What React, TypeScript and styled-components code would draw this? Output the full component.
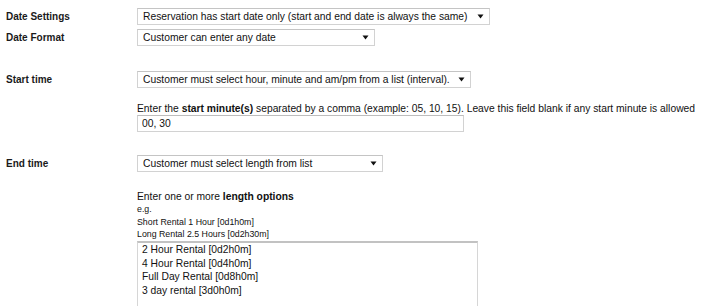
import React from "react";
import styled, { createGlobalStyle } from "styled-components";

const Global = createGlobalStyle`
  html, body { margin: 0; padding: 0; background: #fff; }
  body { font-family: "Liberation Sans", Arial, sans-serif; color: #111; overflow: hidden; }
`;

const Page = styled.div`
  padding: 8px 0 0 6px;
  height: 306px;
  box-sizing: border-box;
  overflow: hidden;
  display: flex;
  flex-direction: column;
`;

const Row = styled.div<{ $mt: number }>`
  display: grid;
  grid-template-columns: 131px auto;
  align-items: center;
  margin-top: ${(p) => p.$mt}px;
`;

const Label = styled.div`
  font-size: 10px;
  font-weight: bold;
  color: #1a1a1a;
`;

const Box = styled.div<{ $w: number }>`
  width: ${(p) => p.$w}px;
  height: 17px;
  box-sizing: border-box;
  border: 1px solid #d2d2d2;
  border-top-color: #c4c4c4;
  background: #fff;
  display: flex;
  align-items: center;
  gap: 4px;
  padding: 0 5px 0 5px;
`;

const NativeSelect = styled.select`
  appearance: none;
  -webkit-appearance: none;
  border: none;
  outline: none;
  background: transparent;
  font-family: inherit;
  font-size: 10.3px;
  color: #111;
  padding: 0;
  margin: 0;
  flex: 1;
  min-width: 0;
  height: 15px;
  line-height: 15px;
`;

const Arrow = () => (
  <svg width="7" height="5" viewBox="0 0 7 5" style={{ flex: "none" }}>
    <polygon points="0.5,0.5 6.5,0.5 3.5,4.5" fill="#111" />
  </svg>
);

const Select = ({ w, value }: { w: number; value: string }) => (
  <Box $w={w}>
    <NativeSelect defaultValue={value}>
      <option>{value}</option>
    </NativeSelect>
    <Arrow />
  </Box>
);

const Field = styled.div<{ $mt: number }>`
  margin-left: 131px;
  margin-top: ${(p) => p.$mt}px;
  display: flex;
  flex-direction: column;
  align-items: flex-start;
`;

const Help = styled.div`
  font-size: 10.3px;
  line-height: 13px;
  white-space: nowrap;
  color: #111;
`;

const Small = styled.div`
  font-size: 8.8px;
  line-height: 12.7px;
  white-space: nowrap;
  color: #111;
`;

const TextInput = styled.input<{ $w: number }>`
  width: ${(p) => p.$w}px;
  height: 17px;
  box-sizing: border-box;
  border: 1px solid #d2d2d2;
  border-top-color: #bdbdbd;
  padding: 0 4px;
  margin: 0;
  font-family: inherit;
  font-size: 10.3px;
  color: #111;
  outline: none;
`;

const TextArea = styled.textarea<{ $w: number }>`
  width: ${(p) => p.$w}px;
  height: 90px;
  flex: none;
  box-sizing: border-box;
  border: 1px solid #d6d6d6;
  border-top: 2px solid #c2c2c2;
  padding: 0 4px;
  margin: 0;
  font-family: inherit;
  font-size: 10.3px;
  line-height: 13.5px;
  color: #111;
  resize: none;
  outline: none;
  overflow: hidden;
`;

export default function App() {
  return (
    <>
      <Global />
      <Page>
        <Row $mt={0}>
          <Label>Date Settings</Label>
          <Select w={353} value="Reservation has start date only (start and end date is always the same)" />
        </Row>
        <Row $mt={4}>
          <Label>Date Format</Label>
          <Select w={238} value="Customer can enter any date" />
        </Row>
        <Row $mt={25}>
          <Label>Start time</Label>
          <Select w={334} value="Customer must select hour, minute and am/pm from a list (interval)." />
        </Row>
        <Field $mt={14}>
          <Help>
            Enter the <b>start minute(s)</b> separated by a comma (example: 05, 10, 15). Leave this field blank if any start minute is allowed
          </Help>
          <TextInput $w={327} defaultValue="00, 30" />
        </Field>
        <Row $mt={23}>
          <Label>End time</Label>
          <Select w={246} value="Customer must select length from list" />
        </Row>
        <Field $mt={18}>
          <Help>
            Enter one or more <b>length options</b>
          </Help>
          <Small>e.g.</Small>
          <Small>Short Rental 1 Hour [0d1h0m]</Small>
          <Small>Long Rental 2.5 Hours [0d2h30m]</Small>
          <TextArea
            $w={341}
            defaultValue={"2 Hour Rental [0d2h0m]\n4 Hour Rental [0d4h0m]\nFull Day Rental [0d8h0m]\n3 day rental [3d0h0m]"}
          />
        </Field>
      </Page>
    </>
  );
}
